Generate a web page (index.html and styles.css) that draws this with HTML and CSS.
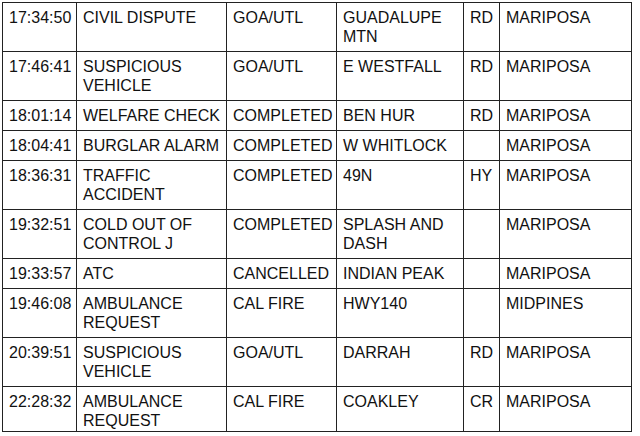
FILE: index.html
```html
<!DOCTYPE html>
<html>
<head>
<meta charset="utf-8">
<link rel="stylesheet" href="styles.css">
</head>
<body>
<table class="log">
  <colgroup>
    <col class="c-time"><col class="c-type"><col class="c-status"><col class="c-street"><col class="c-suffix"><col class="c-city">
  </colgroup>
  <tbody>
    <tr><td>17:34:50</td><td>CIVIL DISPUTE</td><td>GOA/UTL</td><td>GUADALUPE MTN</td><td>RD</td><td>MARIPOSA</td></tr>
    <tr><td>17:46:41</td><td>SUSPICIOUS VEHICLE</td><td>GOA/UTL</td><td>E WESTFALL</td><td>RD</td><td>MARIPOSA</td></tr>
    <tr><td>18:01:14</td><td>WELFARE CHECK</td><td>COMPLETED</td><td>BEN HUR</td><td>RD</td><td>MARIPOSA</td></tr>
    <tr><td>18:04:41</td><td>BURGLAR ALARM</td><td>COMPLETED</td><td>W WHITLOCK</td><td></td><td>MARIPOSA</td></tr>
    <tr><td>18:36:31</td><td>TRAFFIC ACCIDENT</td><td>COMPLETED</td><td>49N</td><td>HY</td><td>MARIPOSA</td></tr>
    <tr><td>19:32:51</td><td>COLD OUT OF CONTROL J</td><td>COMPLETED</td><td>SPLASH AND DASH</td><td></td><td>MARIPOSA</td></tr>
    <tr><td>19:33:57</td><td>ATC</td><td>CANCELLED</td><td>INDIAN PEAK</td><td></td><td>MARIPOSA</td></tr>
    <tr><td>19:46:08</td><td>AMBULANCE REQUEST</td><td>CAL FIRE</td><td>HWY140</td><td></td><td>MIDPINES</td></tr>
    <tr><td>20:39:51</td><td>SUSPICIOUS VEHICLE</td><td>GOA/UTL</td><td>DARRAH</td><td>RD</td><td>MARIPOSA</td></tr>
    <tr class="last"><td>22:28:32</td><td>AMBULANCE REQUEST</td><td>CAL FIRE</td><td>COAKLEY</td><td>CR</td><td>MARIPOSA</td></tr>
  </tbody>
</table>
</body>
</html>
```
FILE: styles.css
```css
html, body {
  margin: 0;
  padding: 0;
  background: #fff;
}
body {
  padding: 2px 0 0 2px;
  font-family: "Liberation Sans", Arial, sans-serif;
  color: #111;
}
.log {
  border-collapse: collapse;
  table-layout: fixed;
  width: 629px;
  font-size: 16px;
  line-height: 19px;
}
.log td {
  border: 1px solid #222;
  padding: 5px 4px 5px 6px;
  vertical-align: top;
  text-align: left;
  overflow: hidden;
}
.log .last td {
  padding-bottom: 1px;
}
.c-time { width: 74px; }
.c-type { width: 150px; }
.c-status { width: 110px; }
.c-street { width: 127px; }
.c-suffix { width: 36px; }
.c-city { width: 132px; }
```
